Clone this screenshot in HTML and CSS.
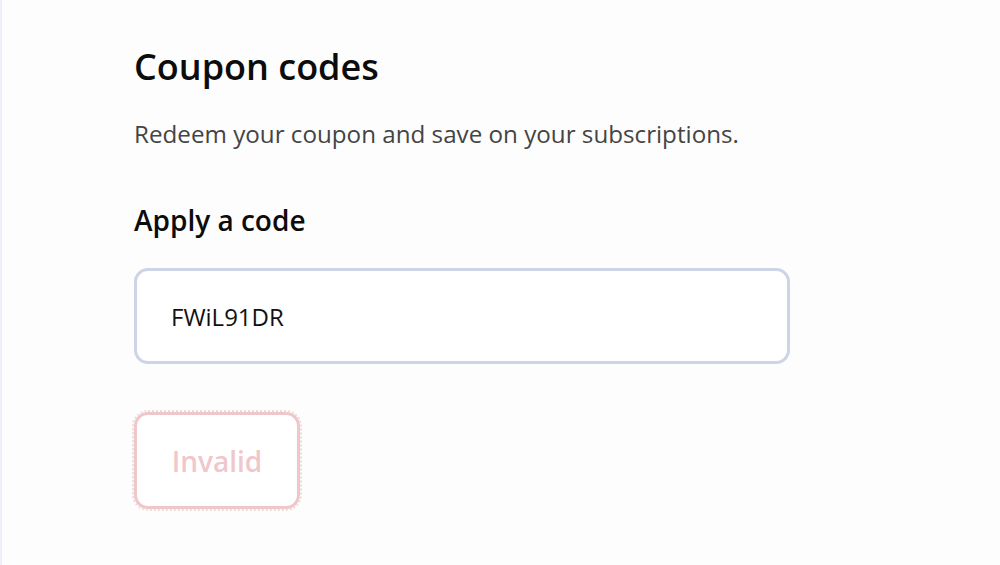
FILE: index.html
```html
<!DOCTYPE html>
<html lang="en">
<head>
<meta charset="utf-8">
<title>Coupon codes</title>
<link rel="stylesheet" href="styles.css">
</head>
<body>
<main class="page">
  <section class="content">
    <h1 class="title">Coupon codes</h1>
    <p class="subtitle">Redeem your coupon and save on your subscriptions.</p>
    <h2 class="label">Apply a code</h2>
    <div class="field"><span class="field-value">FWiL91DR</span></div>
    <button class="btn-invalid" type="button">Invalid</button>
  </section>
</main>
</body>
</html>
```

FILE: styles.css
```css
html, body {
  margin: 0;
  padding: 0;
  height: 100%;
}
body {
  background: #fdfdfd;
  font-family: "Open Sans", "Noto Sans", sans-serif;
  color: #111;
}
.page {
  min-height: 100%;
  border-left: 2px solid #eeeef6;
  box-sizing: border-box;
  padding: 42px 0 0 132px;
}
.content {
  display: flex;
  flex-direction: column;
  align-items: flex-start;
  width: 656px;
}
.title {
  margin: 0;
  font-size: 36px;
  font-weight: 600;
  line-height: 50px;
  color: #0c0c0c;
}
.subtitle {
  margin: 26px 0 0;
  font-size: 24.2px;
  font-weight: 400;
  line-height: 32px;
  color: #444;
}
.label {
  margin: 51px 0 0;
  font-size: 28px;
  font-weight: 600;
  line-height: 38px;
  color: #0c0c0c;
}
.field {
  margin-top: 29px;
  box-sizing: border-box;
  width: 656px;
  height: 96px;
  border: 3px solid #ccd4e6;
  border-radius: 14px;
  background: #fff;
  display: flex;
  align-items: center;
  padding-left: 34px;
}
.field-value {
  font-size: 24px;
  color: #111;
}
.btn-invalid {
  margin-top: 48px;
  box-sizing: border-box;
  width: 166px;
  height: 97px;
  border: 3px solid #efc7c9;
  border-radius: 14px;
  outline: 2px dotted #eddcdd;
  outline-offset: 0;
  background: #fff;
  font-family: "Open Sans", "Noto Sans", sans-serif;
  font-size: 28px;
  font-weight: 600;
  color: #f0c7ca;
  padding: 0;
  cursor: default;
}
```
